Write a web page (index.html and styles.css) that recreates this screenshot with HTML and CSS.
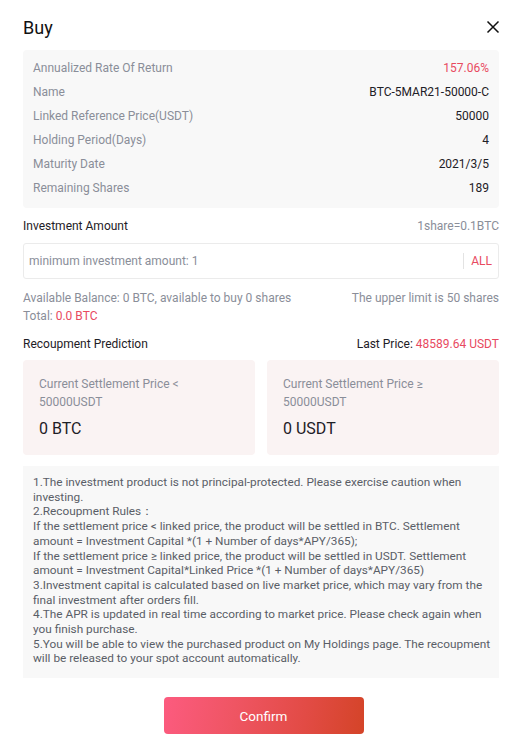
FILE: index.html
```html
<!DOCTYPE html>
<html>
  <head>
    <meta charset="UTF-8">
    <title>Buy</title>
    <link rel="stylesheet" href="styles.css">
  </head>
  <body>
    <div id="dialog">

      <div class="head">
        <h1>Buy</h1>
        <span class="close">
          <svg width="14" height="14" viewBox="0 0 14 14"><path d="M1.5 1.5 L12.5 12.5 M12.5 1.5 L1.5 12.5" stroke="#111" stroke-width="1.5" fill="none"/></svg>
        </span>
      </div>

      <div class="info">
        <div class="row"><span class="label">Annualized Rate Of Return</span><span class="value red">157.06%</span></div>
        <div class="row"><span class="label">Name</span><span class="value">BTC-5MAR21-50000-C</span></div>
        <div class="row"><span class="label">Linked Reference Price(USDT)</span><span class="value">50000</span></div>
        <div class="row"><span class="label">Holding Period(Days)</span><span class="value">4</span></div>
        <div class="row"><span class="label">Maturity Date</span><span class="value">2021/3/5</span></div>
        <div class="row"><span class="label">Remaining Shares</span><span class="value">189</span></div>
      </div>

      <div class="line title-line">
        <span>Investment Amount</span>
        <span class="gray">1share=0.1BTC</span>
      </div>

      <div class="input-box">
        <span class="placeholder">minimum investment amount: 1</span>
        <span class="all">ALL</span>
      </div>

      <div class="line small gray balance">
        <span>Available Balance: 0 BTC, available to buy 0 shares</span>
        <span>The upper limit is 50 shares</span>
      </div>
      <div class="line small gray">
        <span>Total: <span class="red">0.0 BTC</span></span>
      </div>

      <div class="line recoup">
        <span>Recoupment Prediction</span>
        <span>Last Price: <span class="red">48589.64 USDT</span></span>
      </div>

      <div class="cards">
        <div class="card">
          <p class="card-label">Current Settlement Price &lt;<br>50000USDT</p>
          <p class="card-value">0 BTC</p>
        </div>
        <div class="card">
          <p class="card-label">Current Settlement Price ≥<br>50000USDT</p>
          <p class="card-value">0 USDT</p>
        </div>
      </div>

      <div class="notes">
        <p>1.The investment product is not principal-protected. Please exercise caution when investing.</p>
        <p>2.Recoupment Rules：</p>
        <p>If the settlement price &lt; linked price, the product will be settled in BTC. Settlement amount = Investment Capital *(1 + Number of days*APY/365);</p>
        <p>If the settlement price ≥ linked price, the product will be settled in USDT. Settlement amount = Investment Capital*Linked Price *(1 + Number of days*APY/365)</p>
        <p>3.Investment capital is calculated based on live market price, which may vary from the final investment after orders fill.</p>
        <p>4.The APR is updated in real time according to market price. Please check again when you finish purchase.</p>
        <p>5.You will be able to view the purchased product on My Holdings page. The recoupment will be released to your spot account automatically.</p>
      </div>

      <div class="foot">
        <button class="confirm">Confirm</button>
      </div>

    </div>
  </body>
</html>
```

FILE: styles.css
```css
 * {
	margin: 0;
	padding: 0;
	box-sizing: border-box;
 }
 html, body {
	background-color: #ffffff;
 }
 body {
	font-family: Roboto, "Liberation Sans", sans-serif;
	color: #1e2026;
 }
 #dialog {
	width: 527px;
	padding: 0 28px 0 23px;
 }
 .head {
	display: flex;
	justify-content: space-between;
	align-items: center;
	height: 50px;
	padding-top: 4px;
 }
 .head h1 {
	font-size: 18px;
	font-weight: normal;
	color: #111111;
 }
 .close {
	display: flex;
	margin-right: -1px;
 }
 .info {
	background-color: #f8f8f8;
	border-radius: 4px;
	padding: 6px 10px 8px 10px;
 }
 .row {
	display: flex;
	justify-content: space-between;
	align-items: center;
	height: 24px;
	font-size: 12px;
 }
 .label {
	color: #8a8e99;
 }
 .value {
	color: #1e2026;
 }
 .red {
	color: #e84a5f;
 }
 .gray {
	color: #8a8e99;
 }
 .line {
	display: flex;
	justify-content: space-between;
	align-items: center;
	font-size: 12px;
 }
 .title-line {
	height: 35px;
	color: #1e2026;
 }
 .input-box {
	display: flex;
	align-items: center;
	justify-content: space-between;
	height: 36px;
	border: 1px solid #ebebeb;
	border-radius: 3px;
	padding: 0 6px 0 5px;
	font-size: 12px;
 }
 .placeholder {
	color: #8a8e99;
 }
 .all {
	color: #e84a5f;
	border-left: 1px solid #e3e3e3;
	padding-left: 7px;
	line-height: 16px;
	font-size: 12px;
 }
 .small {
	height: 18px;
 }
 .balance {
	margin-top: 10px;
 }
 .recoup {
	height: 32px;
	margin-top: 3px;
 }
 .cards {
	display: grid;
	grid-template-columns: 1fr 1fr;
	gap: 12px;
 }
 .card {
	background-color: #faf3f3;
	border-radius: 4px;
	height: 95px;
	padding: 15px 16px 0 16px;
 }
 .card-label {
	font-size: 12px;
	line-height: 18px;
	color: #8a8e99;
 }
 .card-value {
	font-size: 16px;
	margin-top: 8px;
	color: #1e2026;
 }
 .notes {
	background-color: #f8f8f8;
	margin-top: 11px;
	height: 212px;
	padding: 9px 4px 0 10px;
	font-size: 11.8px;
	line-height: 14.7px;
	color: #5a5e67;
 }
 .foot {
	display: flex;
	justify-content: center;
	padding-top: 19px;
	margin: 0 -28px 0 -23px;
 }
 .confirm {
	width: 200px;
	height: 37px;
	border: none;
	border-radius: 4px;
	background: linear-gradient(100deg, #fc5b7f 0%, #ef5563 35%, #e24b45 70%, #d44428 100%);
	color: #ffffff;
	font-family: Roboto, "Liberation Sans", sans-serif;
	font-size: 13.5px;
 }
```
